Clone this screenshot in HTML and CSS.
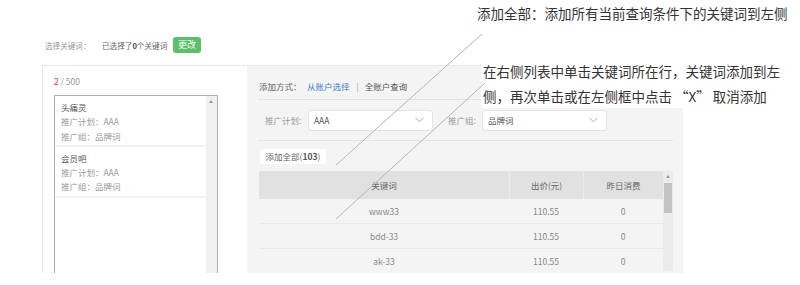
FILE: index.html
```html
<!DOCTYPE html>
<html lang="zh-CN">
<head>
<meta charset="utf-8">
<title>选择关键词</title>
<link rel="stylesheet" href="styles.css">
</head>
<body>
<div class="page">
  <div class="header">
    <span class="hlabel">选择关键词：</span>
    <span class="hcount">已选择了<b>0</b>个关键词</span>
    <span class="hbtn">更改</span>
  </div>
  <div class="panel">
    <div class="left">
      <div class="quota"><span class="red">2</span>&nbsp;/&nbsp;500</div>
      <div class="listbox">
        <div class="items">
          <div class="item">
            <div class="name">头痛灵</div>
            <div class="meta">推广计划：AAA</div>
            <div class="meta">推广组：品牌词</div>
          </div>
          <div class="item">
            <div class="name">会员吧</div>
            <div class="meta">推广计划：AAA</div>
            <div class="meta">推广组：品牌词</div>
          </div>
        </div>
        <div class="vscroll"><span class="arrow"></span></div>
      </div>
    </div>
    <div class="right">
      <div class="way">
        <span class="wlabel">添加方式：</span>
        <span class="wlink">从账户选择</span>
        <span class="wsep">|</span>
        <span class="wother">全账户查询</span>
      </div>
      <div class="filters">
        <span class="flabel fl1">推广计划:</span>
        <div class="select"><span>AAA</span><svg class="chev" width="9" height="6" viewBox="0 0 9 6"><polyline points="0.5,0.8 4.5,4.8 8.5,0.8" fill="none" stroke="#aaa" stroke-width="1"/></svg></div>
        <span class="flabel fl2">推广组:</span>
        <div class="select"><span>品牌词</span><svg class="chev" width="9" height="6" viewBox="0 0 9 6"><polyline points="0.5,0.8 4.5,4.8 8.5,0.8" fill="none" stroke="#aaa" stroke-width="1"/></svg></div>
      </div>
      <div class="addrow"><span class="addall">添加全部(<b>103</b>)</span></div>
      <div class="tablewrap">
        <div class="table">
          <div class="tr th">
            <div class="c1">关键词</div>
            <div class="c2">出价(元)</div>
            <div class="c3">昨日消费</div>
          </div>
          <div class="tr">
            <div class="c1">www33</div>
            <div class="c2">110.55</div>
            <div class="c3">0</div>
          </div>
          <div class="tr">
            <div class="c1">bdd-33</div>
            <div class="c2">110.55</div>
            <div class="c3">0</div>
          </div>
          <div class="tr">
            <div class="c1">ak-33</div>
            <div class="c2">110.55</div>
            <div class="c3">0</div>
          </div>
        </div>
        <div class="tscroll"><span class="arrow"></span><span class="thumb"></span></div>
      </div>
    </div>
  </div>

  <div class="note note1">添加全部：添加所有当前查询条件下的关键词到左侧</div>
  <div class="note note2">在右侧列表中单击关键词所在行，关键词添加到左<br>侧，再次单击或在左侧框中点击 “X” 取消添加</div>
  <svg class="lines" width="800" height="285" viewBox="0 0 800 285">
    <line x1="482" y1="34" x2="336" y2="165" stroke="#b4b4b4" stroke-width="1"/>
    <line x1="485" y1="83" x2="336" y2="219" stroke="#b4b4b4" stroke-width="1"/>
  </svg>
</div>
</body>
</html>
```

FILE: styles.css
```css
html, body {
  margin: 0;
  padding: 0;
  background: #fff;
}
body {
  font-family: "Noto Sans CJK SC", "Noto Sans", sans-serif;
  font-size: 8.5px;
  color: #666;
}
.page {
  position: relative;
  width: 800px;
  height: 285px;
  overflow: hidden;
}
b { font-weight: bold; }

/* header */
.header {
  display: flex;
  align-items: center;
  height: 16px;
  padding: 37px 0 0 45px;
  font-size: 7.6px;
  white-space: nowrap;
}
.hlabel {
  color: #999;
  width: 57px;
  flex: none;
}
.hcount {
  color: #666;
  width: 71px;
  flex: none;
}
.hcount b { color: #444; }
.hbtn {
  flex: none;
  width: 28px;
  height: 16px;
  line-height: 16px;
  text-align: center;
  background: #5cbf6c;
  color: #fff;
  border-radius: 3px;
  font-size: 9px;
}

/* panel */
.panel {
  display: flex;
  margin: 12px 0 0 42px;
  width: 641px;
  height: 208px;
  border-top: 1px solid #e6e6e6;
  border-left: 1px solid #e6e6e6;
  box-sizing: border-box;
  overflow: hidden;
}
.left {
  width: 204px;
  background: #fff;
  padding: 8px 0 0 11px;
  box-sizing: border-box;
  flex: none;
}
.quota {
  height: 14px;
  line-height: 14px;
  color: #999;
}
.red { color: #e8403a; }
.listbox {
  display: flex;
  margin-top: 7px;
  width: 164px;
  height: 200px;
  border: 1px solid #adadad;
  box-sizing: border-box;
}
.items { flex: 1; }
.item {
  padding: 4px 6px 2px;
  border-bottom: 2px solid #f1f1f1;
  line-height: 14.3px;
}
.name { color: #555; }
.meta { color: #999; }
.vscroll {
  position: relative;
  width: 11px;
  background: #f0f0f0;
}
.arrow {
  position: absolute;
  left: 3px;
  top: 4px;
  width: 0;
  height: 0;
  border-left: 2.5px solid transparent;
  border-right: 2.5px solid transparent;
  border-bottom: 3px solid #999;
}

/* right */
.right {
  flex: 1;
  background: #f4f4f4;
  padding: 0 10px 0 11px;
}
.way {
  display: flex;
  align-items: center;
  height: 34px;
  padding-top: 13px;
  box-sizing: border-box;
  border-bottom: 1px solid #e2e2e2;
  padding-bottom: 7px;
  padding-left: 1px;
}
.wlabel { color: #666; width: 48px; }
.wlink { color: #3f7ccb; }
.wsep { color: #999; margin: 0 6px 0 7px; }
.wother { color: #555; }

.filters {
  display: flex;
  align-items: center;
  height: 41px;
  border-bottom: 1px solid #e2e2e2;
  box-sizing: border-box;
  padding-left: 7px;
}
.flabel { color: #999; }
.fl1 { width: 43px; }
.fl2 { width: 34px; margin-left: 15px; }
.select {
  display: flex;
  align-items: center;
  justify-content: space-between;
  width: 125px;
  height: 21px;
  background: #fff;
  border: 1px solid #e3e3e3;
  border-radius: 3px;
  box-sizing: border-box;
  padding: 0 8px 0 5px;
  color: #555;
}
.chev { display: block; }

.addrow {
  padding: 8px 0 0 2px;
  height: 15px;
}
.addall {
  display: inline-block;
  width: 66px;
  height: 15px;
  line-height: 15px;
  background: #fff;
  border-radius: 3px;
  text-align: center;
  color: #666;
}
.addall b { color: #555; }

.tablewrap {
  display: flex;
  margin: 7px 0 0 1px;
  width: 414px;
}
.table { width: 404px; }
.tr {
  display: flex;
  height: 24px;
  line-height: 24px;
  border-bottom: 1px solid #e8e8e8;
  color: #888;
  text-align: center;
}
.tr.th {
  height: 28px;
  line-height: 28px;
  background: #e1e1e1;
  border-bottom: none;
  color: #666;
}
.c1 { width: 250px; }
.c2 { width: 74px; }
.c3 { width: 80px; }
.th .c2, .th .c3 { border-left: 1px solid #ececec; box-sizing: border-box; }
.tscroll {
  position: relative;
  width: 10px;
  height: 100px;
  background: #ececec;
}
.tscroll .arrow { left: 2.5px; top: 4px; }
.thumb {
  position: absolute;
  left: 1px;
  top: 12px;
  width: 8px;
  height: 30px;
  background: #c3c3c3;
}

/* annotations */
.note {
  position: absolute;
  font-size: 13.5px;
  color: #333;
  white-space: nowrap;
}
.note1 {
  left: 477px;
  top: 4px;
  line-height: 18px;
}
.note2 {
  left: 481px;
  top: 59px;
  width: 303px;
  padding-left: 2px;
  line-height: 24.5px;
  background: #fff;
}
.lines {
  position: absolute;
  left: 0;
  top: 0;
  pointer-events: none;
}
```
